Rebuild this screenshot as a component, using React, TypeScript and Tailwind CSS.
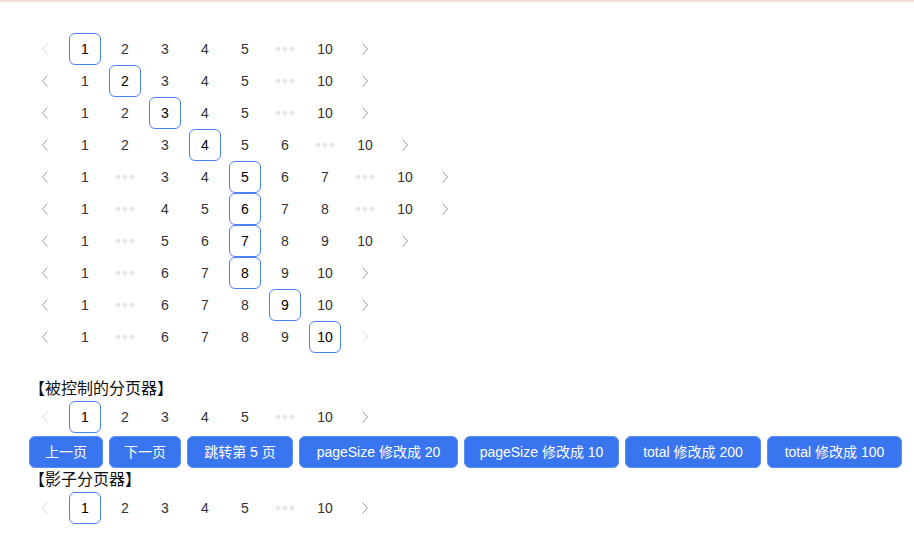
type Item = number | "more";

const rows: { current: number; items: Item[] }[] = [
    { current: 1, items: [1, 2, 3, 4, 5, "more", 10] },
    { current: 2, items: [1, 2, 3, 4, 5, "more", 10] },
    { current: 3, items: [1, 2, 3, 4, 5, "more", 10] },
    { current: 4, items: [1, 2, 3, 4, 5, 6, "more", 10] },
    { current: 5, items: [1, "more", 3, 4, 5, 6, 7, "more", 10] },
    { current: 6, items: [1, "more", 4, 5, 6, 7, 8, "more", 10] },
    { current: 7, items: [1, "more", 5, 6, 7, 8, 9, 10] },
    { current: 8, items: [1, "more", 6, 7, 8, 9, 10] },
    { current: 9, items: [1, "more", 6, 7, 8, 9, 10] },
    { current: 10, items: [1, "more", 6, 7, 8, 9, 10] },
];

const buttons: { label: string; w: string }[] = [
    { label: "上一页", w: "w-[74px]" },
    { label: "下一页", w: "w-[72px]" },
    { label: "跳转第 5 页", w: "w-[106px]" },
    { label: "pageSize 修改成 20", w: "w-[159px]" },
    { label: "pageSize 修改成 10", w: "w-[155px]" },
    { label: "total 修改成 200", w: "w-[136px]" },
    { label: "total 修改成 100", w: "w-[135px]" },
];

function Chevron({ dir, disabled }: { dir: "left" | "right"; disabled: boolean }) {
    return (
        <svg width="8" height="14" viewBox="0 0 8 14" fill="none">
            <path
                d={dir === "left" ? "M6.5 1.5 L1.5 7 L6.5 12.5" : "M1.5 1.5 L6.5 7 L1.5 12.5"}
                stroke={disabled ? "#d9d9d9" : "#9a9a9a"}
                strokeWidth="1"
            />
        </svg>
    );
}

function Pager({ current, items, total = 10 }: { current: number; items: Item[]; total?: number }) {
    return (
        <div className="flex h-8 items-center gap-2">
            <div className="flex h-8 w-8 items-center justify-center">
                <Chevron dir="left" disabled={current === 1} />
            </div>
            {items.map((item, i) =>
                item === "more" ? (
                    <div key={i} className="flex h-8 w-8 items-center justify-center gap-[3px]">
                        <span className="h-[4px] w-[4px] rounded-full border border-[#d4d4d4]" />
                        <span className="h-[4px] w-[4px] rounded-full border border-[#d4d4d4]" />
                        <span className="h-[4px] w-[4px] rounded-full border border-[#d4d4d4]" />
                    </div>
                ) : (
                    <div
                        key={i}
                        className={
                            item === current
                                ? "flex h-8 w-8 items-center justify-center rounded-[6px] border border-[#4a7ff6] text-[14px] text-black"
                                : "flex h-8 w-8 items-center justify-center text-[14px] text-[#333]"
                        }
                    >
                        {item}
                    </div>
                )
            )}
            <div className="flex h-8 w-8 items-center justify-center">
                <Chevron dir="right" disabled={current === total} />
            </div>
        </div>
    );
}

export default function App() {
    const first = rows[0];
    return (
        <div
            className="min-h-[540px] w-[914px] border-t-[2px] border-[#f3ddd6] bg-white"
            style={{ fontFamily: '"Liberation Sans", "Noto Sans CJK SC", sans-serif' }}
        >
            <div className="px-[29px] pt-[31px]">
                <div className="flex flex-col">
                    {rows.map((r) => (
                        <Pager key={r.current} current={r.current} items={r.items} />
                    ))}
                </div>

                <div className="mt-[24px] h-6 text-[16px] leading-6 text-[#111]">【被控制的分页器】</div>
                <Pager current={1} items={first.items} />

                <div className="mt-[3px] flex gap-[6px]">
                    {buttons.map((b) => (
                        <button
                            key={b.label}
                            className={`${b.w} h-8 shrink-0 whitespace-nowrap rounded-[6px] border border-[#5b8cf5] bg-[#3a75f0] text-[14px] text-white`}
                        >
                            {b.label}
                        </button>
                    ))}
                </div>

                <div className="h-6 text-[16px] leading-6 text-[#111]">【影子分页器】</div>
                <Pager current={1} items={first.items} />
            </div>
        </div>
    );
}
